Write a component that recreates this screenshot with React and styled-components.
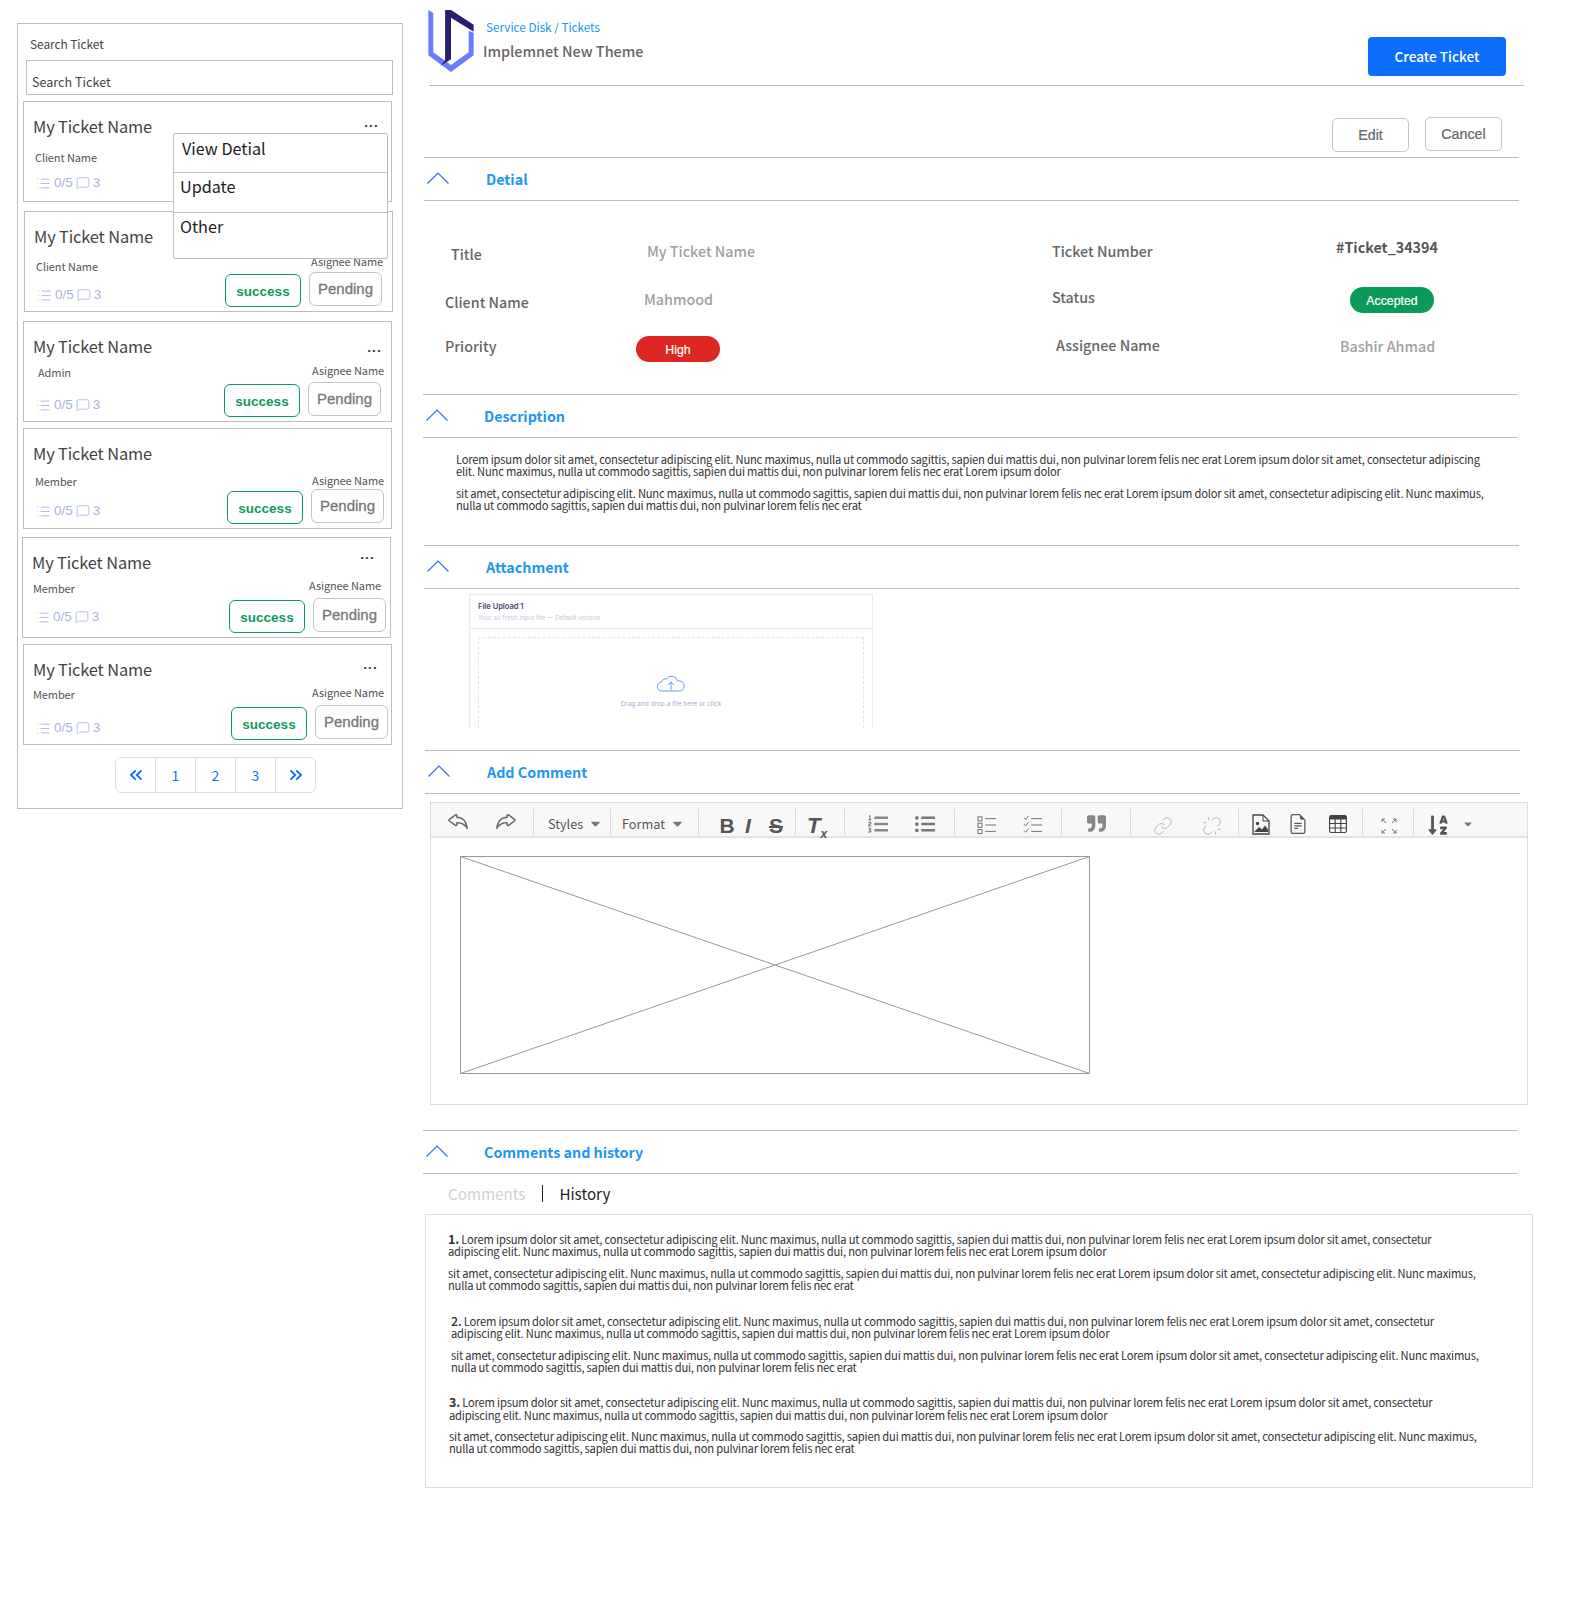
import React from 'react';
import styled, { createGlobalStyle } from 'styled-components';
import { ChevronsLeft, ChevronsRight, Link, List, MessageSquare, Unlink } from 'lucide-react';
import { BsFileEarmarkText, BsReply, BsTable } from 'react-icons/bs';
import { FaCaretDown, FaListOl, FaListUl, FaQuoteRight, FaSortAlphaDown } from 'react-icons/fa';

const SANS = '"Noto Sans CJK SC", "Noto Sans", sans-serif';
const ARIAL = '"Liberation Sans", Arial, sans-serif';
const LINE = '#bdbdbd';
const BLUE = '#2196f3';

const GlobalStyle = createGlobalStyle`
  html, body { margin: 0; padding: 0; background: #fff; }
  body { font-family: ${SANS}; color: #333; }
  * { box-sizing: border-box; }
`;

const Page = styled.div`
  display: flex;
  align-items: flex-start;
  width: 1579px;
  height: 1598px;
  overflow: hidden;
`;

/* ---------- sidebar ---------- */
const Sidebar = styled.aside`
  position: relative;
  flex: none;
  width: 386px;
  height: 786px;
  margin: 23px 0 0 17px;
  border: 1px solid ${LINE};
`;

const SearchLabel = styled.div`
  margin: 11px 0 0 12px;
  font-size: 12px;
  letter-spacing: -0.1px;
  line-height: 18px;
  color: #444;
`;

const SearchInput = styled.div`
  display: flex;
  align-items: flex-end;
  width: 367px;
  height: 35px;
  margin: 7px 0 0 8px;
  padding: 0 5px 3px;
  border: 1px solid ${LINE};
  font-size: 12.6px;
  line-height: 18px;
  color: #444;
`;

const Card = styled.article`
  display: flex;
  justify-content: space-between;
  width: 369px;
  height: 101px;
  margin: ${(p) => p.$top}px 0 0 ${(p) => p.$left}px;
  border: 1px solid ${LINE};
`;

const CardLeft = styled.div`
  display: flex;
  flex-direction: column;
  padding: 13px 0 0 9px;
`;

const TicketName = styled.div`
  font-size: 16.4px;
  letter-spacing: -0.15px;
  line-height: 22px;
  color: #444;
  white-space: nowrap;
`;

const ClientLabel = styled.div`
  margin: ${(p) => p.$gap}px 0 0 ${(p) => p.$indent}px;
  font-size: 11px;
  letter-spacing: -0.1px;
  line-height: 16px;
  color: #555;
`;

const Meta = styled.div`
  display: flex;
  align-items: center;
  gap: 3px;
  margin: ${(p) => p.$gap}px 0 0 3px;
  font-family: ${ARIAL};
  font-size: 13.5px;
  line-height: 16px;
  color: #a8b4dc;
`;

const CardRight = styled.div`
  display: flex;
  flex-direction: column;
  align-items: flex-end;
  padding: 0 ${(p) => p.$pad}px 0 0;
`;

const Dots = styled.div`
  margin: ${(p) => p.$top}px ${(p) => p.$right}px auto 0;
  font-family: ${ARIAL};
  font-weight: 700;
  font-size: 13.5px;
  line-height: 8px;
  letter-spacing: 1.2px;
  color: #333;
`;

const AssigneeLabel = styled.div`
  margin: 0 ${(p) => p.$right}px ${(p) => p.$gap}px 0;
  font-size: 11px;
  letter-spacing: -0.1px;
  line-height: 16px;
  color: #555;
  white-space: nowrap;
`;

const CardActions = styled.div`
  display: flex;
  align-items: flex-end;
  gap: 8px;
  padding-bottom: 4px;
`;

const SuccessButton = styled.div`
  display: flex;
  align-items: center;
  justify-content: center;
  width: 76px;
  height: 33px;
  padding-top: 1px;
  border: 1px solid #0d9a5c;
  border-radius: 6px;
  font-family: ${ARIAL};
  font-weight: 700;
  font-size: 13.5px;
  color: #0d9a5c;
`;

const PendingButton = styled.div`
  display: flex;
  align-items: center;
  justify-content: center;
  width: 73px;
  height: 34px;
  margin-bottom: 1px;
  padding-bottom: 2px;
  border: 1px solid #c4c4c4;
  border-radius: 6px;
  font-family: ${ARIAL};
  font-size: 15px;
  -webkit-text-stroke: 0.3px #777;
  color: #777;
`;

const Dropdown = styled.div`
  position: absolute;
  left: 155px;
  top: 109px;
  width: 215px;
  height: 126px;
  background: #fff;
  border: 1px solid ${LINE};
  border-radius: 2px;
`;

const DropdownItem = styled.div`
  height: ${(p) => p.$h}px;
  padding: ${(p) => p.$top || 0}px 0 0 ${(p) => p.$pad}px;
  border-top: ${(p) => (p.$line ? `1px solid ${LINE}` : 'none')};
  font-size: 16.2px;
  line-height: 26px;
  color: #222;
`;

const Pager = styled.nav`
  display: flex;
  width: 201px;
  height: 36px;
  margin: 12px 0 0 97px;
  border: 1px solid #dedede;
  border-radius: 6px;
`;

const PageCell = styled.div`
  flex: 1;
  display: flex;
  align-items: center;
  justify-content: center;
  font-size: 14px;
  color: #0d6efd;
  & + & { border-left: 1px solid #dedede; }
`;

/* ---------- main column ---------- */
const Main = styled.main`
  flex: none;
  width: 1115px;
  margin-left: 20px;
`;

const TopBar = styled.header`
  display: flex;
  height: 86px;
  margin-left: 6px;
  width: 1095px;
  border-bottom: 1px solid ${LINE};
`;

const Logo = styled.svg`
  flex: none;
  width: 50px;
  height: 63px;
  margin: 9px 1px 0 -3px;
`;

const TopText = styled.div`
  display: flex;
  flex-direction: column;
  margin-left: 6px;
`;

const Crumb = styled.div`
  margin: 18px 0 0 3px;
  font-size: 11.7px;
  line-height: 18px;
  color: ${BLUE};
`;

const PageTitle = styled.div`
  margin-top: 4px;
  font-size: 14.4px;
  font-weight: 500;
  line-height: 22px;
  color: #666;
`;

const CreateButton = styled.button`
  width: 138px;
  height: 39px;
  margin: 37px 18px 0 auto;
  padding: 0 0 2px;
  border: 0;
  border-radius: 4px;
  background: #0d6efd;
  font-family: ${SANS};
  font-size: 13.6px;
  font-weight: 500;
  color: #fff;
`;

const ActionRow = styled.div`
  display: flex;
  justify-content: flex-end;
  gap: 16px;
  height: 71px;
  width: 1079px;
`;

const OutlineButton = styled.div`
  display: flex;
  align-items: center;
  justify-content: center;
  width: 77px;
  height: 34px;
  margin-top: ${(p) => p.$top}px;
  border: 1px solid #c4c4c4;
  border-radius: 5px;
  font-family: ${ARIAL};
  font-size: 14.3px;
  -webkit-text-stroke: 0.2px #666;
  color: #666;
`;

const SectionHead = styled.div`
  display: flex;
  align-items: center;
  width: 1095px;
  height: 44px;
  margin-left: ${(p) => p.$left}px;
  padding: 0 0 2px 2px;
  border-top: 1px solid ${LINE};
  border-bottom: 1px solid ${LINE};
  font-size: 14.3px;
  font-weight: 700;
  color: ${BLUE};
`;

const HeadArrow = styled.span`
  display: flex;
  width: ${(p) => p.$w}px;
  color: #2f6bff;
`;

const DetailGrid = styled.div`
  display: grid;
  grid-template-columns: 192px 416px 284px 1fr;
  grid-auto-rows: 47px;
  height: 193px;
  padding: 29px 0 0 21px;
`;

const Cell = styled.div`
  margin: ${(p) => p.$y}px 0 0 ${(p) => p.$x || 0}px;
  font-size: 14.3px;
  line-height: 22px;
  font-weight: ${(p) => (p.$bold ? 700 : 500)};
  color: ${(p) => p.$color || '#666'};
  white-space: nowrap;
`;

const Pill = styled.div`
  display: flex;
  align-items: center;
  justify-content: center;
  width: 84px;
  height: 26px;
  margin: ${(p) => p.$y}px 0 0 ${(p) => p.$x || 0}px;
  padding-top: 1px;
  border-radius: 13px;
  background: ${(p) => p.$bg};
  font-family: ${ARIAL};
  font-size: 12.3px;
  -webkit-text-stroke: 0.2px #fff;
  color: #fff;
`;

const TextBlock = styled.div`
  height: ${(p) => p.$h}px;
  padding: 15px 0 0 33px;
`;

const Para = styled.p`
  margin: 0 0 9px;
  font-size: 11.2px;
  letter-spacing: -0.21px;
  line-height: 12.3px;
  color: #333;
  white-space: nowrap;
`;

const UploadWrap = styled.div`
  height: 161px;
  padding: 5px 0 0 46px;
`;

const UploadCard = styled.div`
  width: 404px;
  height: 134px;
  border: 1px solid #e6ebf5;
  border-bottom: 0;
`;

const UploadHead = styled.div`
  height: 34px;
  padding: 6px 8px 0;
  border-bottom: 1px solid #e6ebf5;
  font-family: Inter, sans-serif;
`;

const UploadTitle = styled.div`
  font-size: 7.5px;
  line-height: 11px;
  font-weight: 600;
  color: #434a6e;
`;

const UploadHint = styled.div`
  margin-top: 1px;
  font-size: 6.3px;
  line-height: 11px;
  color: #c4c8dc;
`;

const DropZone = styled.div`
  display: flex;
  flex-direction: column;
  align-items: center;
  height: 91px;
  margin: 8px 8px 0;
  padding-top: 36px;
  border: 1px dashed #e0e4f0;
  border-bottom: 0;
  font-family: Inter, sans-serif;
  font-size: 6.5px;
  line-height: 12px;
  color: #a6acd0;
`;

const CloudIcon = styled.svg`
  margin-bottom: 6px;
`;

const Editor = styled.div`
  width: 1098px;
  height: 303px;
  margin: 8px 0 25px 7px;
  border: 1px solid #dcdcdc;
`;

const Toolbar = styled.div`
  display: flex;
  height: 35px;
  padding-left: 1px;
  background: #f8f8f8;
  border-bottom: 2px solid #e2e2e2;
`;

const ToolSep = styled.span`
  flex: none;
  width: 1px;
  height: 26px;
  margin: 6px 1px 0 ${(p) => p.$ml || 0}px;
  background: #d8d8d8;
`;

const Tool = styled.span`
  flex: none;
  display: flex;
  align-items: center;
  justify-content: center;
  width: ${(p) => p.$w || 20}px;
  height: 33px;
  padding-top: ${(p) => p.$pt || 5}px;
  margin-left: ${(p) => p.$ml || 0}px;
  color: ${(p) => p.$color || '#666'};
`;

const Mirror = styled.span`
  display: flex;
  transform: scaleX(-1);
`;

const ToolMenu = styled.span`
  flex: none;
  display: flex;
  align-items: center;
  gap: 5px;
  width: ${(p) => p.$w}px;
  padding: 8px 0 0 ${(p) => p.$pad}px;
  font-size: 12.7px;
  color: #555;
`;

const ToolGlyph = styled.span`
  font-family: ${ARIAL};
  font-size: ${(p) => p.$size || 21}px;
  line-height: 24px;
  font-weight: 700;
  font-style: ${(p) => (p.$italic ? 'italic' : 'normal')};
  text-decoration: ${(p) => (p.$strike ? 'line-through' : 'none')};
  color: #555;
`;

const ClearMark = styled.sub`
  font-size: 12px;
  line-height: 0;
`;

const EditorBody = styled.div`
  padding: 18px 0 0 29px;
`;

const Placeholder = styled.svg`
  display: block;
  width: 630px;
  height: 218px;
`;

const Tabs = styled.div`
  display: flex;
  align-items: center;
  height: 40px;
  padding: 0 0 2px 25px;
  font-size: 15.2px;
`;

const TabOff = styled.span`
  color: #cfcfcf;
`;

const TabDivider = styled.span`
  width: 1px;
  height: 17px;
  margin: 0 16px 0 17px;
  background: #222;
`;

const TabOn = styled.span`
  color: #222;
`;

const HistoryBox = styled.section`
  width: 1108px;
  height: 274px;
  margin-left: 2px;
  padding-top: 18px;
  border: 1px solid #dcdcdc;
`;

const HistoryItem = styled.div`
  margin: ${(p) => p.$top}px 0 0 ${(p) => p.$left}px;
`;

const ItemNo = styled.b`
  font-size: 12.5px;
  font-weight: ${(p) => (p.$light ? 500 : 700)};
`;

/* ---------- content ---------- */
const tickets = [
  { left: 5, top: 6, sub: 'Client Name', subGap: 12, subIndent: 2, metaGap: 10, pad: 9, dotsTop: 17, dotsRight: 3, assigneeGap: 3, assigneeRight: 0 },
  { left: 6, top: 9, sub: 'Client Name', subGap: 11, subIndent: 2, metaGap: 13, pad: 10, dotsTop: 17, dotsRight: 3, assigneeGap: 3, assigneeRight: -1 },
  { left: 5, top: 9, sub: 'Admin', subGap: 7, subIndent: 5, metaGap: 17, pad: 10, dotsTop: 22, dotsRight: -1, assigneeGap: 4, assigneeRight: -3 },
  { left: 5, top: 6, sub: 'Member', subGap: 9, subIndent: 2, metaGap: 14, pad: 7, dotsTop: 0, dotsRight: 0, assigneeGap: 1, assigneeRight: 0, noDots: true },
  { left: 4, top: 8, sub: 'Member', subGap: 7, subIndent: 1, metaGap: 13, pad: 4, dotsTop: 13, dotsRight: 11, assigneeGap: 5, assigneeRight: 5 },
  { left: 5, top: 6, sub: 'Member', subGap: 6, subIndent: 0, metaGap: 18, pad: 3, dotsTop: 16, dotsRight: 10, assigneeGap: 5, assigneeRight: 4 },
];

const P1A = 'Lorem ipsum dolor sit amet, consectetur adipiscing elit. Nunc maximus, nulla ut commodo sagittis, sapien dui mattis dui, non pulvinar lorem felis nec erat Lorem ipsum dolor sit amet, consectetur adipiscing';
const P1B = 'elit. Nunc maximus, nulla ut commodo sagittis, sapien dui mattis dui, non pulvinar lorem felis nec erat Lorem ipsum dolor';
const P2A = 'sit amet, consectetur adipiscing elit. Nunc maximus, nulla ut commodo sagittis, sapien dui mattis dui, non pulvinar lorem felis nec erat Lorem ipsum dolor sit amet, consectetur adipiscing elit. Nunc maximus,';
const P2B = 'nulla ut commodo sagittis, sapien dui mattis dui, non pulvinar lorem felis nec erat';
const H1A = ' Lorem ipsum dolor sit amet, consectetur adipiscing elit. Nunc maximus, nulla ut commodo sagittis, sapien dui mattis dui, non pulvinar lorem felis nec erat Lorem ipsum dolor sit amet, consectetur';
const H1B = 'adipiscing elit. Nunc maximus, nulla ut commodo sagittis, sapien dui mattis dui, non pulvinar lorem felis nec erat Lorem ipsum dolor';

const history = [
  { no: '1.', left: 22, top: 0 },
  { no: '2.', left: 25, top: 24, light: true },
  { no: '3.', left: 23, top: 23 },
];

const CheckboxListIcon = () => (
  <svg width="22" height="22" viewBox="0 0 22 22" fill="none" stroke="#666" strokeWidth="1">
    <rect x="1" y="2" width="4.5" height="4.5" />
    <rect x="1" y="9" width="4.5" height="4.5" />
    <rect x="1" y="16" width="4.5" height="4.5" />
    <path d="M9 4h12M9 11h12M9 18h12" />
  </svg>
);

const CheckListIcon = () => (
  <svg width="22" height="22" viewBox="0 0 22 22" fill="none" stroke="#666" strokeWidth="1">
    <path d="M1 3l2 2 3-4M1 10l2 2 3-4M1 17l2 2 3-4" />
    <path d="M9 4h12M9 11h12M9 18h12" />
  </svg>
);

const ImageDocIcon = () => (
  <svg width="18" height="21" viewBox="0 0 18 21" fill="none">
    <path d="M1 1h10l6 6v13H1z" stroke="#444" strokeWidth="1.3" />
    <path d="M11 1v6h6" stroke="#444" strokeWidth="1" />
    <circle cx="5.500" cy="9.500" r="1.700" fill="#444" />
    <path d="M2 18l5-5 3 2.500 3-4 3 4V18z" fill="#444" />
  </svg>
);

const FullscreenIcon = () => (
  <svg width="18" height="18" viewBox="0 0 18 18" fill="none" stroke="#777" strokeWidth="1">
    <path d="M2 2l4 4M2 2h3M2 2v3M16 2l-4 4M16 2h-3M16 2v3M2 16l4-4M2 16h3M2 16v-3M16 16l-4-4M16 16h-3M16 16v-3" />
  </svg>
);

const SectionHeader = ({ left, title, arrowWidth = 60 }) => (
  <SectionHead $left={left}>
    <HeadArrow $w={arrowWidth}>
      <svg width="24" height="12" viewBox="0 0 24 12" fill="none" stroke="currentColor" strokeWidth="1.2">
        <path d="M1.5 11.5L12 1l10.500 10.500" />
      </svg>
    </HeadArrow>
    {title}
  </SectionHead>
);

const TicketCard = ({ t }) => (
  <Card $left={t.left} $top={t.top}>
    <CardLeft>
      <TicketName>My Ticket Name</TicketName>
      <ClientLabel $gap={t.subGap} $indent={t.subIndent}>{t.sub}</ClientLabel>
      <Meta $gap={t.metaGap}>
        <List size={15} strokeWidth={1.4} /> 0/5 <MessageSquare size={14} strokeWidth={1.4} /> 3
      </Meta>
    </CardLeft>
    <CardRight $pad={t.pad}>
      <Dots $top={t.dotsTop} $right={t.dotsRight}>{t.noDots ? '' : '...'}</Dots>
      <AssigneeLabel $gap={t.assigneeGap} $right={t.assigneeRight}>Asignee Name</AssigneeLabel>
      <CardActions>
        <SuccessButton>success</SuccessButton>
        <PendingButton>Pending</PendingButton>
      </CardActions>
    </CardRight>
  </Card>
);

export default function App() {
  return (
    <Page>
      <GlobalStyle />
      <Sidebar>
        <SearchLabel>Search Ticket</SearchLabel>
        <SearchInput>Search Ticket</SearchInput>
        {tickets.map((t, i) => <TicketCard key={i} t={t} />)}
        <Pager>
          <PageCell><ChevronsLeft size={20} strokeWidth={2.2} /></PageCell>
          <PageCell>1</PageCell>
          <PageCell>2</PageCell>
          <PageCell>3</PageCell>
          <PageCell><ChevronsRight size={20} strokeWidth={2.2} /></PageCell>
        </Pager>
        <Dropdown>
          <DropdownItem $h={38} $pad={8} $top={1}>View Detial</DropdownItem>
          <DropdownItem $h={40} $pad={6} $line>Update</DropdownItem>
          <DropdownItem $h={45} $pad={6} $line>Other</DropdownItem>
        </Dropdown>
      </Sidebar>

      <Main>
        <TopBar>
          <Logo viewBox="0 0 50 64">
            <path d="M2 1l5 3v40l18 13 18-13V22l5 2v23L25 64 2 47z" fill="#6a7bff" />
            <path d="M19 1h6l23 15v7L25 9v42l-11 7 5-6z" fill="#2a1f6e" />
          </Logo>
          <TopText>
            <Crumb>Service Disk / Tickets</Crumb>
            <PageTitle>Implemnet New Theme</PageTitle>
          </TopText>
          <CreateButton>Create Ticket</CreateButton>
        </TopBar>

        <ActionRow>
          <OutlineButton $top={32}>Edit</OutlineButton>
          <OutlineButton $top={31}>Cancel</OutlineButton>
        </ActionRow>

        <SectionHeader left={1} title="Detial" />
        <DetailGrid>
          <Cell $x={7} $y={13}>Title</Cell>
          <Cell $x={11} $y={10} $color="#a0a0a0">My Ticket Name</Cell>
          <Cell $y={10}>Ticket Number</Cell>
          <Cell $y={6} $bold $color="#555">#Ticket_34394</Cell>

          <Cell $x={1} $y={14}>Client Name</Cell>
          <Cell $x={8} $y={11} $color="#a0a0a0">Mahmood</Cell>
          <Cell $y={9}>Status</Cell>
          <Pill $x={14} $y={10} $bg="#0a9a5a">Accepted</Pill>

          <Cell $x={1} $y={11}>Priority</Cell>
          <Pill $y={12} $bg="#dc2723">High</Pill>
          <Cell $x={4} $y={10}>Assignee Name</Cell>
          <Cell $x={4} $y={11} $color="#a0a0a0">Bashir Ahmad</Cell>
        </DetailGrid>

        <SectionHeader left={0} title="Description" arrowWidth={59} />
        <TextBlock $h={107}>
          <Para>{P1A}<br />{P1B}</Para>
          <Para>{P2A}<br />{P2B}</Para>
        </TextBlock>

        <SectionHeader left={1} title="Attachment" />
        <UploadWrap>
          <UploadCard>
            <UploadHead>
              <UploadTitle>File Upload 1</UploadTitle>
              <UploadHint>Your so fresh input file — Default version</UploadHint>
            </UploadHead>
            <DropZone>
              <CloudIcon width="28" height="18" viewBox="0 0 28 18" fill="none" stroke="#3f7bff" strokeWidth="0.8">
                <path d="M7 17H5a4.500 4.500 0 0 1-.5-9 4 4 0 0 1 5-3 6 6 0 0 1 11 2 5 5 0 0 1 3 10h-2" />
                <path d="M7 17h14M14 16V8M11 11l3-3 3 3" />
              </CloudIcon>
              Drag and drop a file here or click
            </DropZone>
          </UploadCard>
        </UploadWrap>

        <SectionHeader left={2} title="Add Comment" />
        <Editor>
          <Toolbar>
            <Tool $w={52} $pt={1}><BsReply size={24} /></Tool>
            <Tool $w={44} $pt={1}><Mirror><BsReply size={24} /></Mirror></Tool>
            <ToolSep $ml={5} />
            <ToolMenu $w={75} $pad={13}>Styles <FaCaretDown size={15} color="#777" /></ToolMenu>
            <ToolSep />
            <ToolMenu $w={86} $pad={10}>Format <FaCaretDown size={15} color="#777" /></ToolMenu>
            <ToolSep />
            <Tool $ml={17} $pt={12}><ToolGlyph>B</ToolGlyph></Tool>
            <Tool $ml={1} $pt={12}><ToolGlyph $italic>I</ToolGlyph></Tool>
            <Tool $ml={8} $pt={12}><ToolGlyph $strike>S</ToolGlyph></Tool>
            <ToolSep $ml={9} />
            <Tool $ml={10} $pt={12}><ToolGlyph $italic $size={22}>T<ClearMark>x</ClearMark></ToolGlyph></Tool>
            <ToolSep $ml={17} />
            <Tool $ml={22} $pt={9}><FaListOl size={20} color="#888" /></Tool>
            <Tool $ml={27} $pt={9}><FaListUl size={20} color="#777" /></Tool>
            <ToolSep $ml={19} />
            <Tool $ml={21} $pt={11}><CheckboxListIcon /></Tool>
            <Tool $ml={26} $pt={11}><CheckListIcon /></Tool>
            <ToolSep $ml={18} />
            <Tool $ml={23} $pt={7}><FaQuoteRight size={19} color="#888" /></Tool>
            <ToolSep $ml={24} />
            <Tool $ml={21} $pt={13}><Link size={24} strokeWidth={1} color="#aaa" /></Tool>
            <Tool $ml={29} $pt={13}><Unlink size={24} strokeWidth={1} color="#aaa" /></Tool>
            <ToolSep $ml={16} />
            <Tool $ml={11} $pt={9}><ImageDocIcon /></Tool>
            <Tool $ml={17} $pt={9}><BsFileEarmarkText size={20} color="#555" /></Tool>
            <Tool $ml={20} $pt={9}><BsTable size={18} color="#444" /></Tool>
            <ToolSep $ml={14} />
            <Tool $ml={15} $pt={13}><FullscreenIcon /></Tool>
            <ToolSep $ml={14} />
            <Tool $ml={13} $pt={11}><FaSortAlphaDown size={22} color="#555" /></Tool>
            <Tool $ml={10} $pt={9}><FaCaretDown size={12} color="#777" /></Tool>
          </Toolbar>
          <EditorBody>
            <Placeholder viewBox="0 0 630 218" preserveAspectRatio="none" fill="none" stroke="#999" strokeWidth="1">
              <rect x="0.500" y="0.500" width="629" height="217" />
              <path d="M0.500 0.500L629.500 217.500M629.500 0.500L0.500 217.500" />
            </Placeholder>
          </EditorBody>
        </Editor>

        <SectionHeader left={0} title="Comments and history" arrowWidth={59} />
        <Tabs>
          <TabOff>Comments</TabOff>
          <TabDivider />
          <TabOn>History</TabOn>
        </Tabs>
        <HistoryBox>
          {history.map((h) => (
            <HistoryItem key={h.no} $left={h.left} $top={h.top}>
              <Para><ItemNo $light={h.light}>{h.no}</ItemNo>{H1A}<br />{H1B}</Para>
              <Para>{P2A}<br />{P2B}</Para>
            </HistoryItem>
          ))}
        </HistoryBox>
      </Main>
    </Page>
  );
}
